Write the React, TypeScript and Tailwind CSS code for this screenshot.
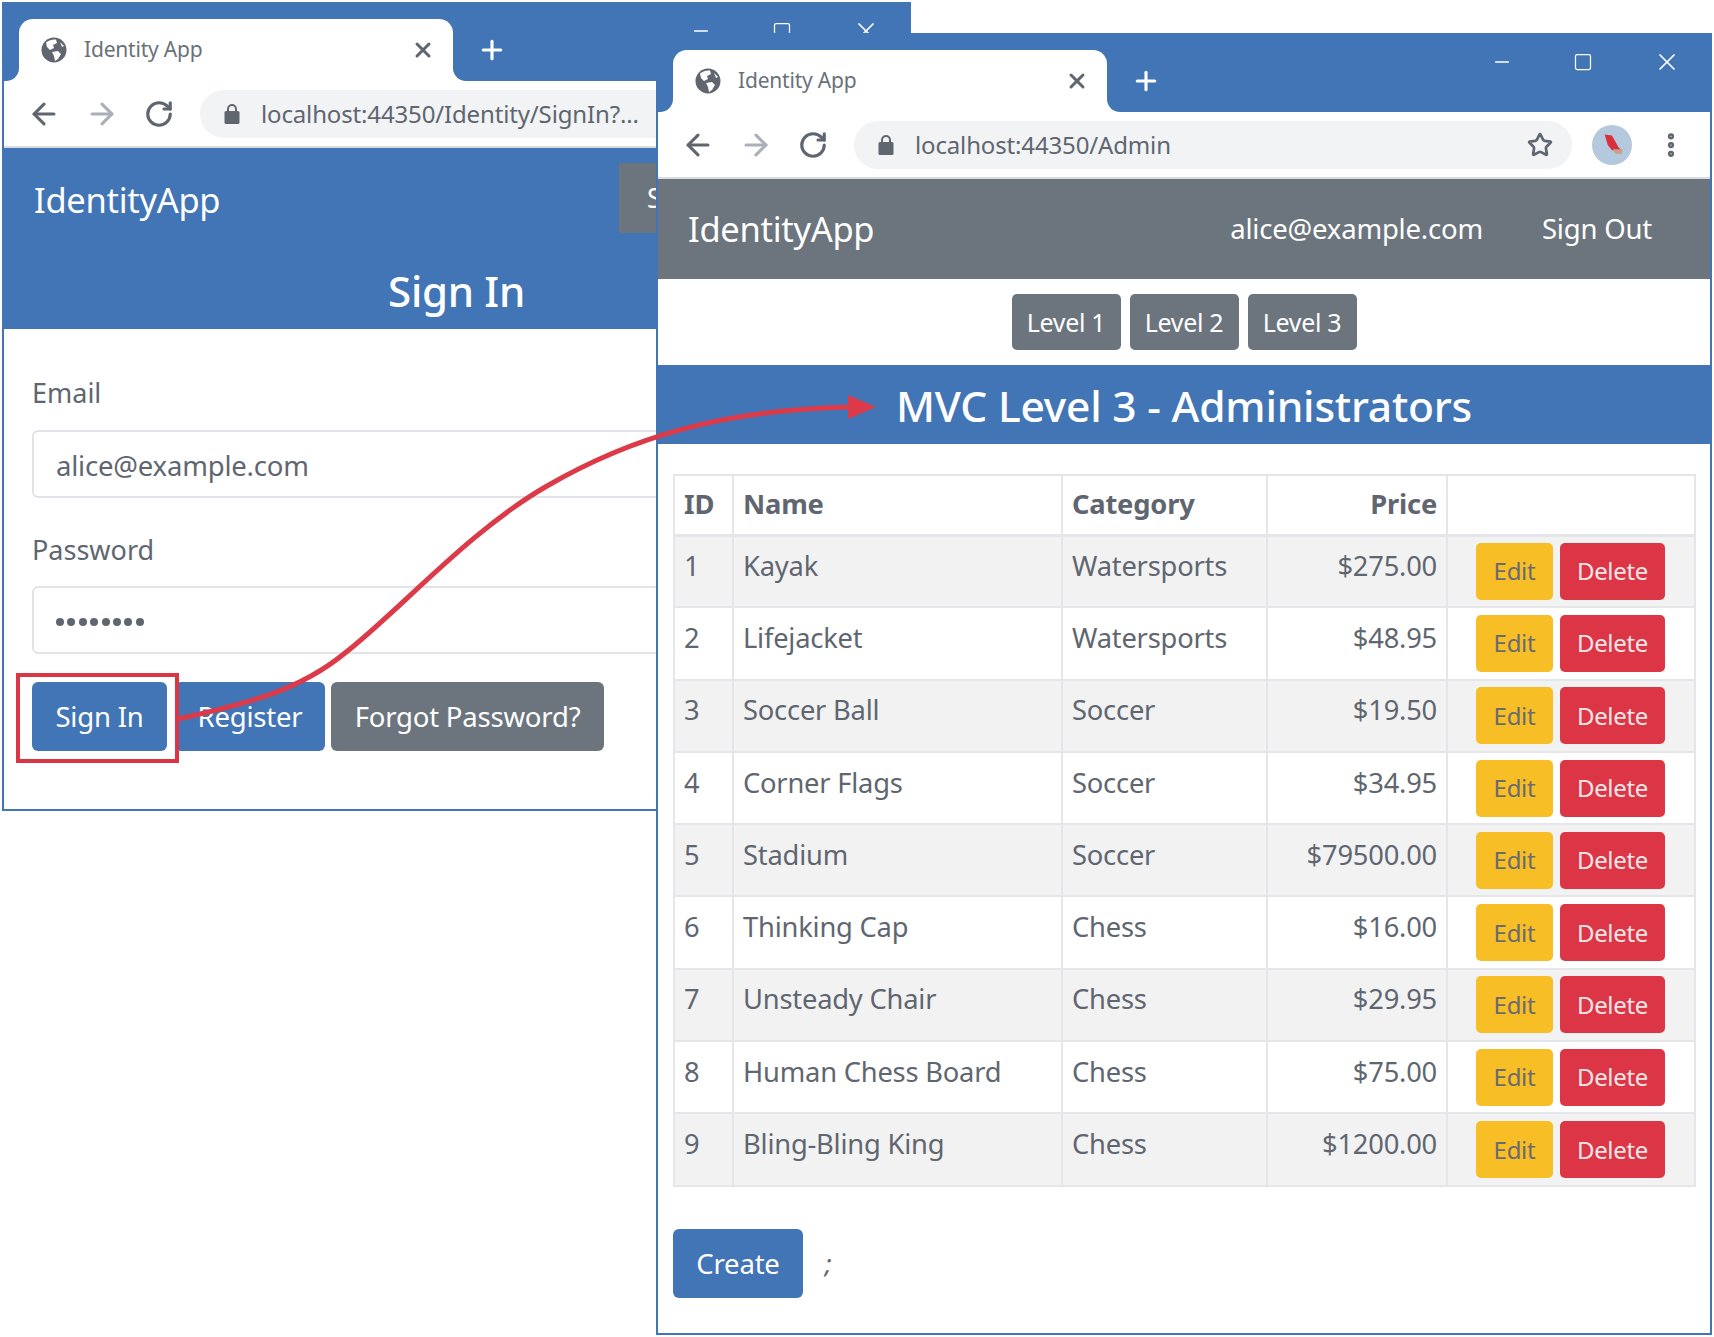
import { ArrowLeft, ArrowRight, EllipsisVertical, Minus, Plus, RotateCw, Square, Star, X } from "lucide-react";

const products = [
  { id: 1, name: "Kayak", category: "Watersports", price: "$275.00" },
  { id: 2, name: "Lifejacket", category: "Watersports", price: "$48.95" },
  { id: 3, name: "Soccer Ball", category: "Soccer", price: "$19.50" },
  { id: 4, name: "Corner Flags", category: "Soccer", price: "$34.95" },
  { id: 5, name: "Stadium", category: "Soccer", price: "$79500.00" },
  { id: 6, name: "Thinking Cap", category: "Chess", price: "$16.00" },
  { id: 7, name: "Unsteady Chair", category: "Chess", price: "$29.95" },
  { id: 8, name: "Human Chess Board", category: "Chess", price: "$75.00" },
  { id: 9, name: "Bling-Bling King", category: "Chess", price: "$1200.00" },
];

function GlobeIcon() {
  return (
    <svg width="26" height="26" viewBox="0 0 26 26" className="shrink-0">
      <circle cx="13" cy="13" r="12.5" fill="#5f6670" />
      <path d="M5 5.5 C8 3 12 2 15 2.5 L16 6 L12 8 L13 11 L9 13 L6 10 Z" fill="#fff" />
      <path d="M11 15 L17 14 L20 17 L17 22 L14 24 L13 19 Z" fill="#fff" />
      <path d="M19 5 L23 9 L21 10 Z" fill="#fff" />
    </svg>
  );
}

function LockIcon() {
  return (
    <svg width="16" height="22" viewBox="0 0 16 22" className="shrink-0">
      <path d="M4 9 V6 a4 4 0 0 1 8 0 V9" fill="none" stroke="#5f6670" strokeWidth="2" />
      <rect x="0.5" y="8" width="15" height="13" rx="1.5" fill="#5f6670" />
    </svg>
  );
}

function Avatar() {
  return (
    <svg width="40" height="40" viewBox="0 0 38 38" className="shrink-0">
      <circle cx="19" cy="19" r="19" fill="#b5c9de" />
      <path d="M12 9 L19 10 L25 21 L29 25 L19 24 L15 19 Z" fill="#d9303e" />
      <path d="M20 23 L29 23 L28 28 L22 27 Z" fill="#c9a08c" />
    </svg>
  );
}

function BrowserChrome({ url }: { url: string }) {
  return (
    <>
      <div className="flex h-[77px] shrink-0 bg-[#4275b5] pl-[15px] pt-[15px]">
        <div className="relative flex h-[62px] w-[434px] items-center rounded-t-[14px] bg-white pl-[22px]">
          <div className="absolute bottom-0 left-[-13px] h-[13px] w-[13px] bg-white">
            <div className="h-full w-full rounded-br-[13px] bg-[#4275b5]" />
          </div>
          <div className="absolute bottom-0 right-[-13px] h-[13px] w-[13px] bg-white">
            <div className="h-full w-full rounded-bl-[13px] bg-[#4275b5]" />
          </div>
          <GlobeIcon />
          <span className="ml-[17px] text-[21px] tracking-[-0.2px] text-[#6a717a]">Identity App</span>
          <X className="absolute left-[392px] top-[19px] text-[#5f6670]" size={24} strokeWidth={3} />
        </div>
        <Plus className="ml-[24px] mt-[16px] text-white" size={30} strokeWidth={2.5} />
        <div className="ml-auto flex h-[24px] items-center gap-[60px] pr-[29px] text-white">
          <Minus size={22} strokeWidth={1.5} />
          <Square size={20} strokeWidth={1.5} />
          <X size={28} strokeWidth={1.5} />
        </div>
      </div>
      <div className="flex h-[67px] shrink-0 items-center border-b-2 border-[#d9dde2] bg-white pl-[23px] pr-[24px]">
        <ArrowLeft className="text-[#5f6670]" size={34} strokeWidth={2.2} />
        <ArrowRight className="ml-[24px] text-[#a9b0ba]" size={34} strokeWidth={2.2} />
        <RotateCw className="ml-[25px] text-[#5f6670]" size={30} strokeWidth={2.5} />
        <div className="ml-[26px] flex h-[48px] flex-1 items-center rounded-full bg-[#f1f3f4] pl-[24px] pr-[19px]">
          <LockIcon />
          <span className="ml-[21px] whitespace-nowrap text-[24px] tracking-[-0.15px] text-[#5f6670]">{url}</span>
          <Star className="ml-auto text-[#5f6670]" size={26} strokeWidth={2.5} />
        </div>
        <div className="ml-[20px]">
          <Avatar />
        </div>
        <EllipsisVertical className="ml-[24px] text-[#5f6670]" size={30} strokeWidth={3} />
      </div>
    </>
  );
}

function SignInWindow() {
  return (
    <div className="absolute left-[2px] top-[2px] flex h-[809px] w-[909px] flex-col border-2 border-[#4275b5] bg-white">
      <BrowserChrome url="localhost:44350/Identity/SignIn?..." />
      <div className="flex h-[88px] items-start justify-between bg-[#4275b5] pl-[30px] pr-[10px] pt-[15px] text-white">
        <span className="mt-[11px] text-[34.5px] tracking-[-0.3px]">IdentityApp</span>
        <button className="h-[70px] w-[280px] bg-[#6c757d] pl-[28px] text-left text-[27px] text-white">S</button>
      </div>
      <div className="flex h-[93px] items-center justify-center bg-[#4275b5] pt-[16px] text-[42px] font-medium tracking-[-0.3px] text-white">
        Sign In
      </div>
      <div className="flex flex-col px-[28px] pt-[47px] text-[#5f6670]">
        <label className="text-[27px] leading-[34px]">Email</label>
        <input
          readOnly
          value="alice@example.com"
          className="mt-[20px] h-[68px] w-full rounded-[6px] border-2 border-[#e1e3e8] px-[22px] pt-[3px] text-[27.5px] tracking-[-0.2px] text-[#5f6670]"
        />
        <label className="mt-[35px] text-[27px] leading-[34px]">Password</label>
        <div className="mt-[19px] flex h-[68px] w-full items-center gap-[3.4px] rounded-[6px] border-2 border-[#e1e3e8] px-[22px] pt-[4px]">
          {[0, 1, 2, 3, 4, 5, 6, 7].map((i) => (
            <span key={i} className="h-[8px] w-[8px] rounded-full bg-[#5f6670]" />
          ))}
        </div>
        <div className="mt-[28px] flex">
          <div className="relative">
            <div className="absolute left-[-16px] top-[-9px] h-[90px] w-[163px] border-[4px] border-[#dc3545]" />
            <button className="relative h-[69px] w-[135px] rounded-[6px] bg-[#4275b5] text-[27.5px] tracking-[-0.2px] text-white">
              Sign In
            </button>
          </div>
          <button className="ml-[8px] h-[69px] w-[150px] rounded-[6px] bg-[#4275b5] text-[27.5px] tracking-[-0.2px] text-white">
            Register
          </button>
          <button className="ml-[6px] h-[69px] w-[273px] rounded-[6px] bg-[#6c757d] text-[27.5px] tracking-[-0.2px] text-white">
            Forgot Password?
          </button>
        </div>
      </div>
    </div>
  );
}

function AdminWindow() {
  return (
    <div className="absolute left-[656px] top-[33px] flex h-[1302px] w-[1056px] flex-col border-2 border-[#4275b5] bg-white">
      <BrowserChrome url="localhost:44350/Admin" />
      <div className="flex h-[100px] shrink-0 items-center bg-[#6c757d] pl-[30px] pr-[58px] text-white">
        <span className="text-[34.5px] tracking-[-0.3px]">IdentityApp</span>
        <span className="ml-auto text-[27.5px] tracking-[-0.2px]">alice@example.com</span>
        <span className="ml-[59px] text-[27.5px] tracking-[-0.2px]">Sign Out</span>
      </div>
      <div className="flex h-[86px] shrink-0 items-center justify-center gap-[9px]">
        {["Level 1", "Level 2", "Level 3"].map((level) => (
          <button key={level} className="h-[56px] w-[109px] rounded-[5px] bg-[#6c757d] pt-[1px] text-[25px] tracking-[-0.3px] text-white">
            {level}
          </button>
        ))}
      </div>
      <div className="flex h-[79px] shrink-0 items-center justify-center bg-[#4275b5] pt-[2px] text-[42.5px] font-medium tracking-[-0.2px] text-white">
        MVC Level 3 - Administrators
      </div>
      <div className="px-[15px] pt-[30px]">
        <table className="w-[1021px] table-fixed border-collapse text-[27.3px] tracking-[-0.2px] text-[#5f6670]">
          <colgroup>
            <col className="w-[59px]" />
            <col className="w-[329px]" />
            <col className="w-[205px]" />
            <col className="w-[180px]" />
            <col className="w-[248px]" />
          </colgroup>
          <thead>
            <tr className="h-[60px] border-b-[3px] border-[#dee2e6]">
              <th className="border-2 border-b-[3px] border-[#e4e6ea] px-[9px] text-left font-bold">ID</th>
              <th className="border-2 border-b-[3px] border-[#e4e6ea] px-[9px] text-left font-bold">Name</th>
              <th className="border-2 border-b-[3px] border-[#e4e6ea] px-[9px] text-left font-bold">Category</th>
              <th className="border-2 border-b-[3px] border-[#e4e6ea] px-[9px] text-right font-bold">Price</th>
              <th className="border-2 border-b-[3px] border-[#e4e6ea]" />
            </tr>
          </thead>
          <tbody>
            {products.map((p) => (
              <tr key={p.id} className="h-[72.3px] even:bg-white odd:bg-[#f2f2f3]">
                <td className="border-2 border-[#e4e6ea] px-[9px] pb-[10px]">{p.id}</td>
                <td className="border-2 border-[#e4e6ea] px-[9px] pb-[10px]">{p.name}</td>
                <td className="border-2 border-[#e4e6ea] px-[9px] pb-[10px]">{p.category}</td>
                <td className="border-2 border-[#e4e6ea] px-[9px] pb-[10px] text-right">{p.price}</td>
                <td className="border-2 border-[#e4e6ea] pl-[28px]">
                  <div className="flex gap-[7px]">
                    <button className="h-[57px] w-[77px] rounded-[5px] bg-[#f7be25] text-[24px] tracking-[-0.3px] text-[#6a6a70]">Edit</button>
                    <button className="h-[57px] w-[105px] rounded-[5px] bg-[#dc3545] text-[24px] tracking-[-0.3px] text-[#f3e6e8]">Delete</button>
                  </div>
                </td>
              </tr>
            ))}
          </tbody>
        </table>
        <div className="mt-[42px] flex items-center text-[#5f6670]">
          <button className="h-[69px] w-[130px] rounded-[6px] bg-[#4275b5] text-[27.5px] tracking-[-0.2px] text-white">Create</button>
          <span className="ml-[22px] text-[26px] italic">;</span>
        </div>
      </div>
    </div>
  );
}

function RedArrow() {
  return (
    <svg className="absolute left-0 top-0 z-20" width="1714" height="1337" viewBox="0 0 1714 1337" fill="none">
      <path
        d="M178 719 C250 703 300 690 345 653 C400 610 470 530 547 486 C630 438 720 410 850 407"
        stroke="#dc3a48"
        strokeWidth="5"
      />
      <polygon points="876,407 848,395 848,419" fill="#dc3a48" />
    </svg>
  );
}

export default function App() {
  return (
    <div className="relative h-[1337px] w-[1714px] overflow-hidden bg-white font-['Noto_Sans',sans-serif]">
      <SignInWindow />
      <AdminWindow />
      <RedArrow />
    </div>
  );
}
